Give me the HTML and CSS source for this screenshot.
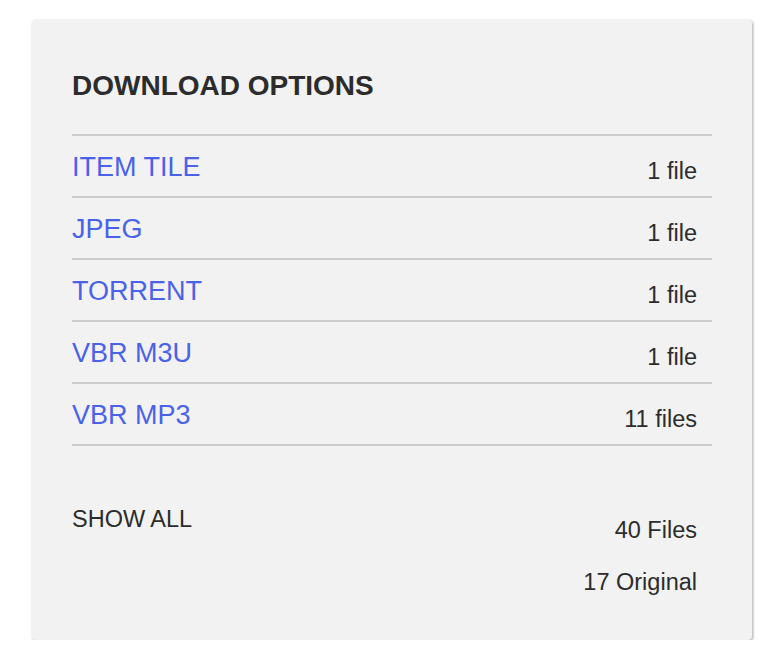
FILE: index.html
```html
<!DOCTYPE html>
<html lang="en">
<head>
<meta charset="utf-8">
<title>Download Options</title>
<link rel="stylesheet" href="styles.css">
</head>
<body>
  <section class="card">
    <h2 class="card-title">DOWNLOAD OPTIONS</h2>
    <ul class="formats">
      <li class="format"><a class="format-link" href="#">ITEM TILE</a><span class="format-count">1 file</span></li>
      <li class="format"><a class="format-link" href="#">JPEG</a><span class="format-count">1 file</span></li>
      <li class="format"><a class="format-link" href="#">TORRENT</a><span class="format-count">1 file</span></li>
      <li class="format"><a class="format-link" href="#">VBR M3U</a><span class="format-count">1 file</span></li>
      <li class="format"><a class="format-link" href="#">VBR MP3</a><span class="format-count">11 files</span></li>
    </ul>
    <div class="summary">
      <a class="show-all" href="#">SHOW ALL</a>
      <div class="totals">
        <span class="total">40 Files</span>
        <span class="total">17 Original</span>
      </div>
    </div>
  </section>
</body>
</html>
```
FILE: styles.css
```css
* { box-sizing: border-box; }

html, body {
  margin: 0;
  padding: 0;
  background: #ffffff;
}

body {
  font-family: "Liberation Sans", Arial, Helvetica, sans-serif;
  color: #2c2c2c;
  padding: 20px 0 0 32px;
}

.card {
  width: 720px;
  background: #f2f2f2;
  border-radius: 4px;
  box-shadow: 1px 1px 3px rgba(0, 0, 0, 0.35);
  padding: 50px 40px 43px 40px;
}

.card-title {
  margin: 0 0 32px 0;
  font-size: 28px;
  line-height: 32px;
  font-weight: 700;
  color: #2c2c2c;
}

.formats {
  list-style: none;
  margin: 0;
  padding: 0;
  border-top: 2px solid #cccccc;
}

.format {
  display: flex;
  justify-content: space-between;
  align-items: flex-start;
  height: 62px;
  border-bottom: 2px solid #cccccc;
}

.format-link {
  padding-top: 16px;
  font-size: 27px;
  line-height: 30px;
  color: #4a62e8;
  text-decoration: none;
}

.format-count {
  padding-top: 20px;
  padding-right: 15px;
  font-size: 23.5px;
  line-height: 30px;
  color: #2c2c2c;
}

.summary {
  display: flex;
  justify-content: space-between;
  align-items: flex-start;
}

.show-all {
  margin-top: 58px;
  font-size: 23.5px;
  line-height: 30px;
  color: #2c2c2c;
  text-decoration: none;
}

.totals {
  display: flex;
  flex-direction: column;
  align-items: flex-end;
  gap: 22px;
  margin-top: 69px;
  padding-right: 15px;
}

.total {
  font-size: 23.5px;
  line-height: 30px;
}
```
